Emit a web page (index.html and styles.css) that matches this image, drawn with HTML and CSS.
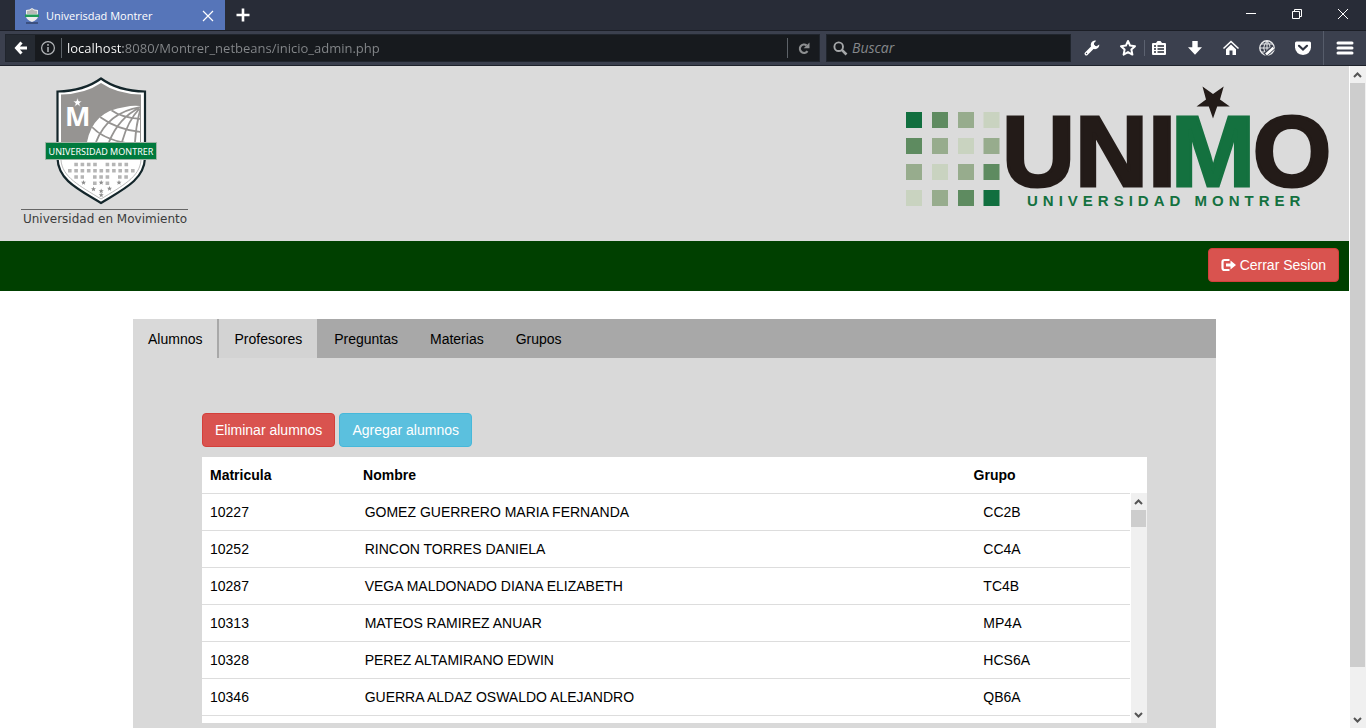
FILE: index.html
```html
<!DOCTYPE html>
<html lang="es">
<head>
<meta charset="utf-8">
<title>Univerisdad Montrer</title>
<link rel="stylesheet" href="styles.css">
</head>
<body>
<div class="browser">
  <div class="tabstrip">
    <div class="browser-tab">
      <svg class="favicon" width="14" height="16" viewBox="0 0 14 16" aria-hidden="true"><path d="M1 2 Q5 2 7 0 Q9 2 13 2 V9 Q12 12 7 14 Q2 12 1 9Z" fill="#ececec"/><path d="M2 3 Q5 3 7 1 Q9 3 12 3 V6 H2Z" fill="#b9b9b7"/><path d="M0 6.500H14V9H0Z" fill="#1f9a58"/><path d="M1 15H13" stroke="#33456f" stroke-width="1.500"/></svg>
      <span class="browser-tab-title">Univerisdad Montrer</span>
      <button class="icon-button tab-close" aria-label="Cerrar pestaña"><svg width="12" height="12" viewBox="0 0 12 12"><path d="M1 1L11 11M11 1L1 11" stroke="#fff" stroke-width="1.200"/></svg></button>
    </div>
    <button class="icon-button new-tab" aria-label="Nueva pestaña"><svg width="14" height="14" viewBox="0 0 14 14"><path d="M7 0.500V13.500M0.500 7H13.500" stroke="#fff" stroke-width="2.600"/></svg></button>
    <div class="window-controls">
      <button class="icon-button" aria-label="Minimizar"><svg width="12" height="12" viewBox="0 0 12 12"><path d="M1 5.500H11" stroke="#fff"/></svg></button>
      <button class="icon-button" aria-label="Restaurar"><svg width="12" height="12" viewBox="0 0 12 12" fill="none" stroke="#fff"><path d="M1.500 3.500H8.500V10.500H1.500ZM3.500 3.500V1.500H10.500V8.500H8.500"/></svg></button>
      <button class="icon-button" aria-label="Cerrar"><svg width="12" height="12" viewBox="0 0 12 12"><path d="M1 1L11 11M11 1L1 11" stroke="#fff"/></svg></button>
    </div>
  </div>

  <div class="toolbar">
    <div class="url-box">
      <button class="icon-button back" aria-label="Atrás"><svg width="14" height="14" viewBox="0 0 14 14" fill="none" stroke="#fff" stroke-width="3"><path d="M7.500 1.500L2.500 7L7.500 12.500M3 7H13"/></svg></button>
      <button class="icon-button info" aria-label="Información del sitio"><svg width="16" height="16" viewBox="0 0 16 16"><circle cx="8" cy="8" r="6.400" fill="none" stroke="#b4b7ba" stroke-width="1.200"/><path d="M8 4V5.700M8 7V12" stroke="#b4b7ba" stroke-width="1.500"/></svg></button>
      <input class="url-input" type="text" aria-label="Dirección" value="localhost:8080/Montrer_netbeans/inicio_admin.php">
      <button class="icon-button reload" aria-label="Recargar"><svg width="12" height="13" viewBox="0 0 12 13"><path d="M9.500 9.200A4.200 4.200 0 1 1 8.600 3.300" fill="none" stroke="#8d8f91" stroke-width="2.200"/><path d="M11.500 0.500V6.300H5.700Z" fill="#8d8f91"/></svg></button>
    </div>
    <div class="search-box">
      <svg width="15" height="15" viewBox="0 0 15 15" fill="none" stroke="#a5a7a9" aria-hidden="true"><circle cx="5.700" cy="5.700" r="4.300" stroke-width="1.900"/><path d="M8.800 8.800L13.500 13.500" stroke-width="2.600"/></svg>
      <input class="search-input" type="text" aria-label="Buscar" placeholder="Buscar">
    </div>
    <div class="tools">
      <button class="icon-button" aria-label="Herramientas"><svg width="18" height="18" viewBox="0 0 18 18"><path d="M3.300 14.700L10.500 7.500" stroke="#fff" stroke-width="3.600" stroke-linecap="round"/><path d="M13.200 1.700A4.300 4.300 0 1 0 16.300 5.400L13.600 7.300L11 6.400L11 4Z" fill="#fff"/><circle cx="3.500" cy="14.500" r="0.700" fill="#3b404e"/></svg></button>
      <button class="icon-button" aria-label="Marcador"><svg width="18" height="18" viewBox="0 0 18 18"><path d="M9 2L11.100 6.600L16 7.200L12.400 10.600L13.400 15.600L9 13.100L4.600 15.600L5.600 10.600L2 7.200L6.900 6.600Z" fill="none" stroke="#fff" stroke-width="2" stroke-linejoin="round"/></svg></button>
      <span class="tool-divider"></span>
      <button class="icon-button" aria-label="Lista de lectura"><svg width="18" height="18" viewBox="0 0 18 18"><path d="M3 4H6L7.500 2H10.500L12 4H15Q16 4 16 5V15Q16 16 15 16H3Q2 16 2 15V5Q2 4 3 4Z" fill="#fff"/><path d="M4 7H6M7.500 7H14M4 10H6M7.500 10H14M4 13H6M7.500 13H14" stroke="#252a35" stroke-width="1.400"/></svg></button>
      <button class="icon-button" aria-label="Descargas"><svg width="18" height="18" viewBox="0 0 18 18"><path d="M6.300 2H11.700V8.300H16L9 15.800L2 8.300H6.300Z" fill="#fff"/></svg></button>
      <button class="icon-button" aria-label="Inicio"><svg width="18" height="18" viewBox="0 0 18 18"><path d="M1.500 9.500L9 2.500L16.500 9.500" fill="none" stroke="#fff" stroke-width="1.600"/><path d="M4 10.200L9 5.600L14 10.200V16H10.500V11.500H7.500V16H4Z" fill="#fff"/></svg></button>
      <button class="icon-button" aria-label="Traductor"><svg width="18" height="18" viewBox="0 0 18 18" fill="none" stroke="#e9eaec"><circle cx="9" cy="9" r="7.200" stroke-width="1.400"/><path d="M9 2V16M2 9H16M3.500 5H14.500M3.500 13H14.500M9 2Q2.500 9 9 16M9 2Q15.500 9 9 16"/><path d="M7 16L15.500 8.500" stroke="#3b404e" stroke-width="4.600"/><path d="M8 15.500L15.500 8.800" stroke="#fff" stroke-width="2.600"/></svg></button>
      <button class="icon-button" aria-label="Pocket"><svg width="18" height="18" viewBox="0 0 18 18"><path d="M2.500 2.500H15.500Q17 2.500 17 4V8.500Q16.500 15 9 16Q1.500 15 1 8.500V4Q1 2.500 2.500 2.500Z" fill="#fff"/><path d="M5 6.800L9 10.600L13 6.800" fill="none" stroke="#303542" stroke-width="2.200" stroke-linecap="round"/></svg></button>
    </div>
    <button class="icon-button menu" aria-label="Menú"><svg width="18" height="18" viewBox="0 0 18 18"><path d="M2 4H16M2 9H16M2 14H16" stroke="#fff" stroke-width="3" stroke-linecap="round"/></svg></button>
  </div>

  <div class="viewport">
    <div class="page">
      <header class="site-header">
        <svg class="shield-logo" width="173" height="152" viewBox="19 76 173 152" role="img" aria-label="Universidad Montrer, Universidad en Movimiento">
          <defs>
            <clipPath id="globe"><path d="M87 142Q93 111 125 107Q133 105 140 106V142Z"/></clipPath>
            <path id="star" d="M0 -2.600L.7 -.8L2.500 -.8L1.100 .4L1.600 2.200L0 1.200L-1.600 2.200L-1.100 .4L-2.500 -.8L-.7 -.8Z"/>
          </defs>
          <path d="M101 78.500Q84 91 57.500 91.500V158C58 180 78 189 101 203C124 189 144 180 145 158V91.500Q118 91 101 78.500Z" fill="#fff" stroke="#14262b" stroke-width="2.200"/>
          <path d="M101 83Q85 94 61 94.500V142H141V94.500Q117 94 101 83Z" fill="#969492"/>
          <g clip-path="url(#globe)">
            <path d="M80 100H141V142H80Z" fill="#fff"/>
            <path d="M141 107Q108 112 96 142M141 107Q119 117 109 142M141 107Q128 120 122 142M141 107Q136 124 135 142M111 110Q122 118 141 119M100 117Q118 130 141 132M92 127Q103 139 126 143" fill="none" stroke="#969492" stroke-width="1.800"/>
          </g>
          <text x="65" y="126" class="shield-letter">M</text>
          <use href="#star" fill="#fff" stroke="#969492" stroke-width=".4" transform="translate(77.500 102.500) scale(1.900)"/>
          <path d="M61 160C62 177 80 186 101 199C122 186 140 177 141 160" fill="none" stroke="#aaa" stroke-width=".8"/>
          <g stroke="#b5b5b5" stroke-width="3.600" fill="none" stroke-dasharray="3.600 2.700">
            <path d="M74.300 164.500H97M105.600 164.500H130M68 170.800H135M74.300 177H84M93 177H109.500M118 177H130M93 183.300H97M105.600 183.300H110"/>
          </g>
          <g fill="#8e8e8e"><use href="#star" x="83.500" y="182.500"/><use href="#star" x="101.200" y="182.500"/><use href="#star" x="119" y="182.500"/><use href="#star" x="93.500" y="189"/><use href="#star" x="109.500" y="188.500"/><use href="#star" x="101.200" y="191"/><use href="#star" x="101.200" y="195"/></g>
          <path d="M45.500 142.500H156.500V159.500H45.500Z" fill="#007a3d" stroke="#9fb5a6"/>
          <text x="101" y="155" class="ribbon-text">UNIVERSIDAD MONTRER</text>
          <path d="M21 209.500H188" stroke="#666"/>
          <text x="105" y="223" class="motto-text">Universidad en Movimiento</text>
        </svg>
        <svg class="unimo-logo" width="426" height="126" viewBox="905 84 426 126" role="img" aria-label="UNIMO Universidad Montrer">
          <g fill="#116f3f"><path d="M906 112h16v16h-16zM983.500 190h16v16h-16z"/></g>
          <g fill="#5e8b60"><path d="M932 112h16v16h-16zM906 138h16v16h-16zM983.500 164h16v16h-16zM958 190h16v16h-16z"/></g>
          <g fill="#97ac8d"><path d="M958 112h16v16h-16zM932 138h16v16h-16zM983.500 138h16v16h-16zM906 164h16v16h-16zM958 164h16v16h-16zM932 190h16v16h-16z"/></g>
          <g fill="#c9d3c0"><path d="M983.500 112h16v16h-16zM958 138h16v16h-16zM932 164h16v16h-16zM906 190h16v16h-16z"/></g>
          <text x="1089" y="186" class="unimo-text">UNI</text>
          <text x="1213" y="186" class="unimo-text unimo-m">M</text>
          <text x="1292" y="186" class="unimo-text">O</text>
          <path d="M1213 118.500L1208.800 106.500H1196.500L1206 99.500L1202.500 86.500L1213 94L1223.700 86.500L1220 99.500L1229.800 106.500H1217.200Z" fill="#231b18"/>
          <text x="1027" y="206" class="unimo-subtitle">UNIVERSIDAD MONTRER</text>
        </svg>
      </header>

      <nav class="session-bar">
        <button class="btn btn-danger"><svg class="btn-icon" width="15" height="14" viewBox="0 0 15 14" aria-hidden="true"><path d="M8.500 2H3.500Q1.500 2 1.500 4V10Q1.500 12 3.500 12H8.500" fill="none" stroke="#fff" stroke-width="2.200"/><path d="M5 5.500H9.500V2.500L15 7L9.500 11.500V8.500H5Z" fill="#fff"/></svg> Cerrar Sesion</button>
      </nav>

      <main class="content">
        <nav class="nav-tabs">
          <a class="nav-tab active" href="#alumnos">Alumnos</a>
          <a class="nav-tab hovered" href="#profesores">Profesores</a>
          <a class="nav-tab" href="#preguntas">Preguntas</a>
          <a class="nav-tab" href="#materias">Materias</a>
          <a class="nav-tab" href="#grupos">Grupos</a>
        </nav>
        <section class="tab-panel" id="alumnos">
          <div class="actions">
            <button class="btn btn-danger">Eliminar alumnos</button>
            <button class="btn btn-info">Agregar alumnos</button>
          </div>
          <div class="grid">
            <table class="grid-head">
              <thead><tr><th scope="col">Matricula</th><th scope="col">Nombre</th><th scope="col">Grupo</th></tr></thead>
            </table>
            <div class="grid-scroll">
              <div class="grid-rows">
                <table class="grid-body">
                  <tbody>
                    <tr><td>10227</td><td>GOMEZ GUERRERO MARIA FERNANDA</td><td>CC2B</td></tr>
                    <tr><td>10252</td><td>RINCON TORRES DANIELA</td><td>CC4A</td></tr>
                    <tr><td>10287</td><td>VEGA MALDONADO DIANA ELIZABETH</td><td>TC4B</td></tr>
                    <tr><td>10313</td><td>MATEOS RAMIREZ ANUAR</td><td>MP4A</td></tr>
                    <tr><td>10328</td><td>PEREZ ALTAMIRANO EDWIN</td><td>HCS6A</td></tr>
                    <tr><td>10346</td><td>GUERRA ALDAZ OSWALDO ALEJANDRO</td><td>QB6A</td></tr>
                    <tr><td></td><td></td><td></td></tr>
                  </tbody>
                </table>
              </div>
              <div class="scrollbar grid-scrollbar" aria-hidden="true">
                <svg class="scroll-arrow" width="15" height="17" viewBox="0 0 15 17"><path d="M4 11L7.500 7.500L11 11" fill="none" stroke="#555" stroke-width="2"/></svg>
                <div class="scroll-track"><div class="scroll-thumb"></div></div>
                <svg class="scroll-arrow" width="15" height="17" viewBox="0 0 15 17"><path d="M4 7L7.500 10.500L11 7" fill="none" stroke="#555" stroke-width="2"/></svg>
              </div>
            </div>
          </div>
        </section>
      </main>
    </div>
    <div class="scrollbar" aria-hidden="true">
      <svg class="scroll-arrow" width="15" height="17" viewBox="0 0 15 17"><path d="M4 11L7.500 7.500L11 11" fill="none" stroke="#555" stroke-width="2"/></svg>
      <div class="scroll-track"><div class="scroll-thumb"></div></div>
      <svg class="scroll-arrow" width="15" height="17" viewBox="0 0 15 17"><path d="M4 7L7.500 10.500L11 7" fill="none" stroke="#555" stroke-width="2"/></svg>
    </div>
  </div>
</div>
</body>
</html>
```
FILE: styles.css
```css
* { box-sizing: border-box; }

body {
  margin: 0;
  font: 14px/20px "Liberation Sans", Arial, sans-serif;
  color: #000;
  background: #fff;
}

svg { display: block; flex: none; }
button, input { font: inherit; }

.browser {
  display: flex;
  flex-direction: column;
  height: 100vh;
  overflow: hidden;
}

/* Window frame */
.icon-button {
  display: flex;
  align-items: center;
  justify-content: center;
  flex: none;
  padding: 0;
  border: 0;
  background: none;
}

.tabstrip {
  display: flex;
  flex: none;
  height: 31px;
  padding-left: 15px;
  background: #282c37;
  border-bottom: 1px solid #1b1e26;
}

.browser-tab {
  display: flex;
  align-items: center;
  gap: 7px;
  width: 210px;
  padding: 2px 11px 0 10px;
  background: #5675b9;
  color: #fff;
  font: 11px/16px "Open Sans", "Noto Sans", sans-serif;
}

.browser-tab-title { flex: 1; white-space: nowrap; }
.new-tab { width: 36px; }

.window-controls { display: flex; margin-left: auto; }
.window-controls .icon-button { width: 46px; padding-bottom: 3px; }

.toolbar {
  display: flex;
  align-items: center;
  flex: none;
  height: 35px;
  padding-left: 5px;
  background: #3b404e;
  border-bottom: 1px solid #1e222b;
}

.url-box,
.search-box {
  display: flex;
  align-items: center;
  height: 28px;
  background: #171a1e;
  border: 1px solid #20252d;
}

.url-box { flex: 1; margin-right: 6px; }
.back { align-self: stretch; width: 29px; background: #252a32; }
.info { width: 26px; }

.url-input {
  flex: 1;
  min-width: 0;
  height: 20px;
  padding: 0 0 0 5px;
  border: 0;
  border-left: 1px solid #5d6268;
  outline: 0;
  background: linear-gradient(to right, #fff 61px, #85888b 61px);
  background-clip: text;
  -webkit-background-clip: text;
  color: transparent;
  font: 13px/20px "Open Sans", "Noto Sans", sans-serif;
}

.reload {
  width: 32px;
  height: 20px;
  border-left: 1px solid #5d6268;
}

.search-box { width: 245px; gap: 4px; padding-left: 6px; }

.search-input {
  flex: 1;
  min-width: 0;
  height: 20px;
  padding: 0;
  border: 0;
  outline: 0;
  background: none;
  color: #85888b;
  font: italic 14px/20px "Open Sans", "Noto Sans", sans-serif;
}

.search-input::placeholder { color: #85888b; }

.tools {
  display: flex;
  align-items: center;
  padding: 0 2px 0 3px;
}

.tools .icon-button { width: 36px; height: 28px; }
.tool-divider { width: 1px; height: 16px; margin: 0 -2px; background: #5c6270; }
.tool-divider + .icon-button { margin-left: -2px; }

.menu {
  align-self: stretch;
  width: 43px;
  border-left: 1px solid #565c6a;
}

.viewport { display: flex; flex: 1; min-height: 0; }
.page { flex: 1; min-width: 0; overflow: hidden; }

/* Scrollbars */
.scrollbar {
  display: flex;
  flex-direction: column;
  flex: none;
  width: 17px;
  padding-right: 1px;
  border-left: 1px solid #fff;
  background: #f0f0f0;
}

.scroll-track { flex: 1; }
.scroll-thumb { height: 93%; background: #cdcdcd; }
.grid-scrollbar .scroll-thumb { height: 17px; }

/* Site */
.site-header {
  display: flex;
  justify-content: space-between;
  align-items: flex-start;
  height: 175px;
  padding: 10px 18px 10px 19px;
  background: #dbdbdb;
}

.unimo-logo { margin-top: 8px; }

.shield-letter { font: bold 27px "Open Sans", sans-serif; fill: #fff; }
.ribbon-text { font: 9px "Noto Sans", sans-serif; fill: #fff; text-anchor: middle; }
.motto-text { font: 12px "DejaVu Sans", sans-serif; fill: #3c3c3c; text-anchor: middle; }

.unimo-text {
  font: bold 101px "Liberation Sans", Arial, sans-serif;
  fill: #231b18;
  stroke: #231b18;
  stroke-width: 3px;
  text-anchor: middle;
}

.unimo-m { fill: #14713f; stroke: #14713f; }
.unimo-subtitle { font: bold 15px "Liberation Sans", Arial, sans-serif; fill: #14713f; letter-spacing: 5px; }

.session-bar {
  display: flex;
  justify-content: flex-end;
  align-items: center;
  height: 50px;
  padding: 0 10px 2px;
  background: #004000;
}

.btn {
  display: inline-flex;
  align-items: center;
  gap: 4px;
  padding: 6px 12px;
  border: 1px solid;
  border-radius: 4px;
  color: #fff;
  line-height: 20px;
  white-space: nowrap;
}

.btn-danger { background: #d9534f; border-color: #d43f3a; }
.btn-info { background: #5bc0de; border-color: #46b8da; }

.content { margin: 28px 133px 0; }

.nav-tabs { display: flex; gap: 2px; background: #a8a8a8; }

.nav-tab {
  padding: 10px 15px 9px;
  color: #000;
  text-decoration: none;
}

.nav-tab.active { background: #d9d9d9; }
.nav-tab.hovered { background: #d3d3d3; }

.tab-panel { padding: 55px 69px 40px; background: #d9d9d9; }
.actions { display: flex; gap: 4px; margin-bottom: 10px; }

.grid { background: #fff; }
.grid table { border-collapse: separate; border-spacing: 0; table-layout: fixed; width: 100%; }
.grid th, .grid td { height: 36px; padding: 8px; text-align: left; line-height: 20px; }

.grid-head th:nth-child(1) { width: 16.2%; }
.grid-head th:nth-child(2) { width: 64.6%; }

.grid-scroll { display: flex; height: 230px; }
.grid-rows { flex: 1; min-width: 0; overflow: hidden; }
.grid-body td { height: 37px; border-top: 1px solid #ddd; }
.grid-body td:nth-child(1), .grid-body td:nth-child(3) { width: 16.667%; }
```
